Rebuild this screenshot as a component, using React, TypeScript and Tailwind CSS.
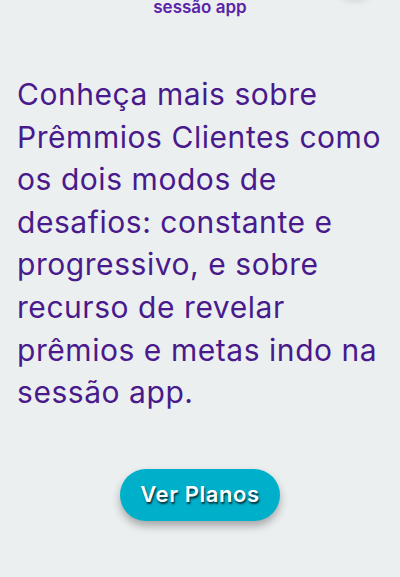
export default function App() {
  const lines = [
    "Conheça mais sobre",
    "Prêmmios Clientes como",
    "os dois modos de",
    "desafios: constante e",
    "progressivo, e sobre",
    "recurso de revelar",
    "prêmios e metas indo na",
    "sessão app.",
  ];
  return (
    <div className="relative min-h-[577px] overflow-hidden bg-[#eceff0] font-['Inter',sans-serif]">
      <div className="absolute right-[22px] top-[-46px] h-[46px] w-[46px] rounded-full bg-[#eceff0] shadow-[0_2px_6px_rgba(0,0,0,0.1)]" />
      <p className="mt-[-3px] text-center text-[17px] font-semibold leading-[20px] text-[#5a24a6]">
        sessão app
      </p>
      <p className="mt-[56px] px-[17px] text-[30px] leading-[42.6px] tracking-[0.55px] text-[#481a8c] whitespace-nowrap">
        {lines.map((l, i) => (
          <span key={i} className="block">
            {l}
          </span>
        ))}
      </p>
      <div className="mt-[55px] flex justify-center">
        <button className="h-[52px] w-[160px] rounded-full bg-[#00afc9] text-[22px] font-semibold tracking-[0.6px] text-white shadow-[0_5px_8px_rgba(0,0,0,0.3)] [text-shadow:1px_2px_2px_rgba(0,0,0,0.75)]">
          Ver Planos
        </button>
      </div>
    </div>
  );
}
